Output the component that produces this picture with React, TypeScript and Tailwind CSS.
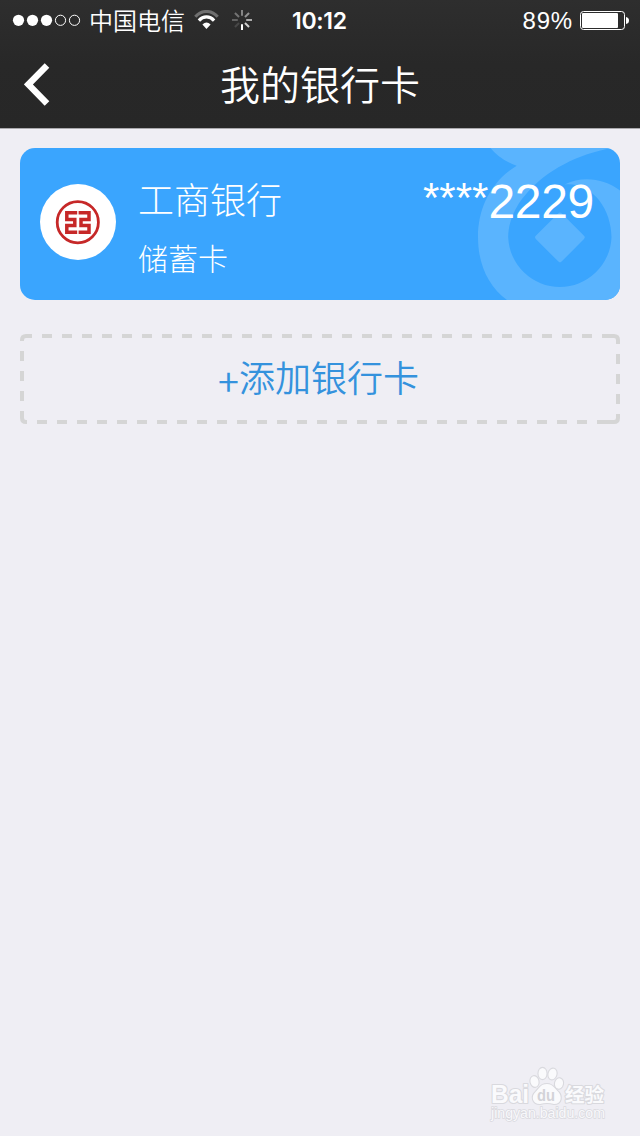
const cjk = "font-['Liberation_Sans','Noto_Sans_CJK_SC',sans-serif]";

function Signal() {
  return (
    <svg className="h-5 w-[70px]" viewBox="0 0 70 20" fill="white">
      <circle cx="6.5" cy="10.3" r="5.6" />
      <circle cx="20.5" cy="10.3" r="5.6" />
      <circle cx="34.5" cy="10.3" r="5.6" />
      <circle cx="48.5" cy="10.3" r="5.1" fill="none" stroke="white" strokeWidth="1" />
      <circle cx="62.5" cy="10.3" r="5.1" fill="none" stroke="white" strokeWidth="1" />
    </svg>
  );
}

function Wifi() {
  return (
    <svg className="h-5 w-[26px]" viewBox="0 0 26 20" fill="none">
      <path d="M1.3 6.8C7.8-.4 17.2-.4 23.7 6.8" stroke="#707070" strokeWidth="3" />
      <path d="M4.9 10.6C9.2 5.7 15.8 5.7 20.1 10.6" stroke="white" strokeWidth="3.2" />
      <path d="M8.4 14.4Q12.5 10.6 16.6 14.4L12.5 19Z" fill="white" />
    </svg>
  );
}

const spokes = [
  { angle: 0, color: '#858585' },
  { angle: 45, color: '#929292' },
  { angle: 90, color: '#acacac' },
  { angle: 135, color: '#d0d0d0' },
  { angle: 180, color: '#ffffff' },
  { angle: 225, color: '#484848' },
  { angle: 270, color: '#626262' },
  { angle: 315, color: '#747474' },
];

function Spinner() {
  return (
    <svg className="size-5" viewBox="-10 -10 20 20">
      {spokes.map((s) => (
        <path key={s.angle} d="M0-4.2V-10" stroke={s.color} strokeWidth="2" transform={`rotate(${s.angle})`} />
      ))}
    </svg>
  );
}

function StatusBar() {
  return (
    <div className="flex h-10 items-center pl-3 pr-[10px] text-white">
      <Signal />
      <span className="ml-[7px] w-[97px] whitespace-nowrap pt-[3px] text-[24px] leading-[37px] font-[350]">中国电信</span>
      <span className="ml-[8px] flex"><Wifi /></span>
      <span className="ml-3 flex"><Spinner /></span>
      <span className="ml-[40px] w-[59px] whitespace-nowrap font-['Inter',sans-serif] text-[23px] leading-10 font-semibold tracking-[-0.3px] pt-px">10:12</span>
      <span className="ml-auto whitespace-nowrap pt-[2px] text-[24px] leading-[38px] tracking-[0.8px]">89%</span>
      <svg className="ml-[7px] h-5 w-[50px]" viewBox="0 0 50 20">
        <rect x="0.5" y="1.5" width="44" height="18" rx="3" fill="none" stroke="white" />
        <rect x="2" y="3" width="36" height="15" rx="1" fill="white" />
        <path d="M46 7Q49 7.5 49 10.5T46 14Z" fill="white" />
      </svg>
    </div>
  );
}

function BankLogo() {
  return (
    <svg className="size-[76px] shrink-0" viewBox="0 0 76 76" fill="none">
      <circle cx="38" cy="38" r="38" fill="white" />
      <circle cx="37.8" cy="38.2" r="20.6" stroke="#c62828" strokeWidth="2.8" />
      <g stroke="#c62828" strokeWidth="3.5">
        <path d="M37.2 28.8H26.8V35.4H34.8V41.6H26.8V48.3H37.2" />
        <path d="M38.6 28.8H49V35.4H41V41.6H49V48.3H38.6" />
      </g>
    </svg>
  );
}

function CoinMark() {
  return (
    <svg className="absolute right-0 top-0 h-[152px] w-[150px]" viewBox="470 148 150 152" fill="#5ab4fe">
      <path d="M490.5 148Q500 160 516.7 165.7C491 181 478 208 478 237C478 264 488 286 507 300H620V190.5C605 179 583 175 564.5 184.5C592 182 611.5 209 611.5 237.5A51.7 51.7 0 0 1 508.2 237.5C508 224 514 207 527 193C547 170 578 154 612 148Z" />
      <path d="M558.4 213.2Q560 211.6 561.6 213.2L584 235.7Q585.6 237.3 584 238.9L561.6 261.6Q560 263.2 558.4 261.6L535.8 238.9Q534.2 237.3 535.8 235.7Z" />
    </svg>
  );
}

function PawWatermark() {
  return (
    <svg className="h-[66px] w-[124px]" viewBox="486 1062 124 66">
      <g fill="#fafafc" stroke="#d9d9de" strokeWidth="2.2" paintOrder="stroke" strokeLinejoin="round">
        <text x="491" y="1102.5" fontFamily="Liberation Sans" fontWeight="bold" fontSize="25.5" textLength="38" lengthAdjust="spacingAndGlyphs">Bai</text>
        <ellipse cx="534.5" cy="1081.5" rx="4" ry="5.4" transform="rotate(-12 534.5 1081.5)" />
        <ellipse cx="542.5" cy="1073.5" rx="4" ry="5.6" />
        <ellipse cx="552.5" cy="1074" rx="4" ry="5.4" transform="rotate(15 552.5 1074)" />
        <ellipse cx="559" cy="1083.5" rx="4" ry="5.2" transform="rotate(12 559 1083.5)" />
        <path d="M547 1084C540 1084 539 1089 535.5 1092C531 1096 532 1104 540 1104Q547 1102 554 1104C562 1104 562 1096 558.5 1092C555 1089 553 1084 547 1084Z" />
        <text x="565" y="1101.5" fontFamily="Noto Sans CJK SC" fontWeight="bold" fontSize="19.5" textLength="39">经验</text>
      </g>
      <text x="537" y="1100.5" fontFamily="Liberation Sans" fontWeight="bold" fontSize="17" fill="#d3d3d8" textLength="18" lengthAdjust="spacingAndGlyphs">du</text>
      <text x="491" y="1118" fontFamily="Liberation Sans" fontSize="14" fill="#f8f8fb" stroke="#d9d9de" strokeWidth="1.4" paintOrder="stroke" textLength="114" lengthAdjust="spacingAndGlyphs">jingyan.baidu.com</text>
    </svg>
  );
}

export default function App() {
  return (
    <div className={`flex h-[1136px] w-[640px] flex-col overflow-hidden bg-[#efeef4] ${cjk}`}>
      <header className="h-[129px] border-b border-[#aaa9ad] bg-linear-to-b from-[#2e2e2e] via-[#282828] to-[#272727] text-white">
        <StatusBar />
        <div className="grid h-[88px] grid-cols-[120px_1fr_120px] items-center">
          <svg className="ml-6 h-11 w-[26px]" viewBox="0 0 26 44" fill="none">
            <path d="M23 3.4L4.4 22.4L23 41.6" stroke="white" strokeWidth="6.4" />
          </svg>
          <h1 className="pt-[5px] text-center text-[40px] leading-[83px] font-[350] whitespace-nowrap">我的银行卡</h1>
        </div>
      </header>
      <main className="flex-1 px-5 pt-[19px]">
        <section className="relative flex h-[152px] items-start overflow-hidden rounded-[15px] bg-[#3aa5fe] pl-5 pr-[26px] text-white">
          <CoinMark />
          <div className="mt-9 flex"><BankLogo /></div>
          <div className="relative ml-[22px] mt-[29px]">
            <div className="text-[36px] leading-[50px] font-light">工商银行</div>
            <div className="mt-[11px] text-[30px] leading-[44px] font-light">储蓄卡</div>
          </div>
          <div className="relative ml-auto mt-[26px] flex text-[48px] leading-[56px]">
            <span className="-mt-[4px] text-[42px]">****</span>
            <span className="tracking-[-0.3px]">2229</span>
          </div>
        </section>
        <button className="relative mt-[34px] flex h-[90px] w-full items-center justify-center text-[36px] font-[350] text-[#3492dd]">
          <svg className="absolute inset-0 h-[90px] w-[600px]" viewBox="0 0 600 90" fill="none" stroke="#d5d5d5" strokeWidth="4">
            <path d="M22 2H580" strokeDasharray="10 10" />
            <path d="M17 88H575" strokeDasharray="10 10" />
            <path d="M2 17V75" strokeDasharray="10 10" />
            <path d="M598 20V75" strokeDasharray="10 10" />
            <path d="M2 7V6Q2 2 6 2H12M582 2H594Q598 2 598 6V10M598 80V84Q598 88 594 88H577M7 88H6Q2 88 2 84V77" />
          </svg>
          <span className="relative -ml-[3px] flex pt-px whitespace-nowrap">
            <span className="font-['Noto_Sans_CJK_SC',sans-serif] text-[38px] leading-[54px]">+</span>
            <span className="leading-[54px]">添加银行卡</span>
          </span>
        </button>
      </main>
      <footer className="mb-2 ml-[486px] flex"><PawWatermark /></footer>
    </div>
  );
}
